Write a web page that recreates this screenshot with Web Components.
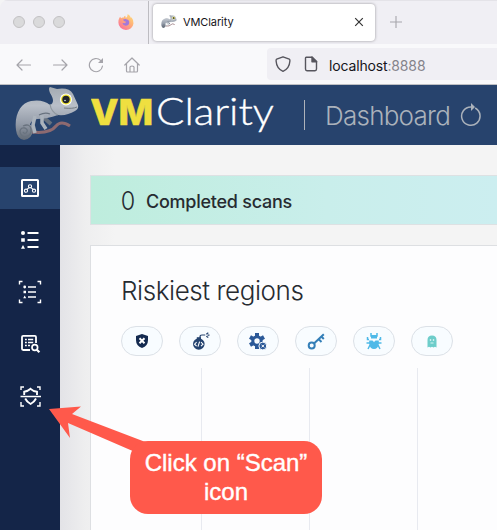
<!DOCTYPE html>
<html lang="en"><head><meta charset="utf-8"><title>VMClarity</title>
<style>html,body{margin:0;height:100%;overflow:hidden;font-family:Inter,"Liberation Sans",sans-serif}body{background:#f4f4f5}</style></head>
<body><vm-window></vm-window>
<script>
const define=(name,html)=>customElements.define(name,class extends HTMLElement{
  constructor(){super();const t=document.createElement('template');t.innerHTML=html;this.attachShadow({mode:'open'}).append(t.content.cloneNode(true));}
});
const icons={
 chart:'<rect x="4" y="4" width="16" height="16" rx=".6" stroke-width="2"/><g stroke-width="1.1"><circle cx="8" cy="14.7" r="1.6"/><circle cx="12" cy="10.3" r="1.6"/><circle cx="16" cy="14.7" r="1.6"/><path d="M9 13.4 11 11.6M13 11.6 15 13.4"/></g>',
 list:'<path d="M9.5 5H20.5M9.5 12H20.5M9.5 19H20.5" stroke-width="2"/><g fill="currentColor" stroke="none"><circle cx="5" cy="5" r="2"/><path d="M3.2 10.2h3.6v3.6H3.2zM5 17l2 3.7H3z"/></g>',
 scanlist:'<path d="M1.5 4.5V1.5H4.5M19.5 1.5H22.5V4.5M1.5 19.5V22.5H4.5M19.5 22.5H22.5V19.5" stroke-width="1.4"/><path d="M10 7H18M10 12H18M10 17H18" stroke-width="1.5"/><g fill="currentColor" stroke="none"><circle cx="6.7" cy="7" r="1.4"/><path d="M5.5 10.8h2.5v2.5H5.5zM6.7 15.6l1.5 2.6H5.2z"/></g>',
 search:'<path d="M12 18H5.2Q4 18 4 16.8V5Q4 3.8 5.2 3.8H16.8Q18 3.8 18 5V11" stroke-width="1.8"/><path d="M7 7.5h1.8M10 7.5h5.2M7 10.5h1.8M10 10.5h5.2M7 13.5h1.8M10 13.5h2" stroke-width="1.5"/><circle cx="16.8" cy="15.5" r="2.8" stroke-width="1.7"/><path d="m18.8 17.7 2.6 2.6" stroke-width="2.2"/>',
 shield:'<path d="M3 6V3H6M19 3H22V6M3 18V22H6M19 22H22V18" stroke-width="1.4"/><path d="M2.5 12.5H23" stroke-width="1.5"/><path d="M6.2 11V7.8Q10 7.2 12.6 4.8Q15 7.2 19 7.8V11M7.2 14.5Q9 18.2 12.6 20Q16.2 18.2 18 14.5" stroke-width="1.9"/>'
};
customElements.define('vm-nav-item',class extends HTMLElement{
 constructor(){super();this.attachShadow({mode:'open'});}
 connectedCallback(){this.shadowRoot.innerHTML=`<style>:host{display:flex;height:42px;align-items:center;justify-content:center;color:#fff}:host([active]){background:#27436d}svg{display:block;width:24px;height:24px;fill:none;stroke:currentColor}</style><svg viewBox="0 0 24 24">${icons[this.getAttribute('icon')]}</svg>`;}
});
define('vm-tabs',`<style>
:host{display:flex;height:44px;background:#f0eff4;box-sizing:border-box;border-top:1px solid #e4e3e8}
.left{display:flex;align-items:center;border-right:1px solid #bdbcc1;box-sizing:border-box;width:149px;padding-left:13px;padding-bottom:1px}
i{width:10px;height:10px;border:1px solid #c2c1c3;border-radius:50%;background:#dadadb;margin-right:8px}
.fox{margin-left:44px;width:18px;height:18px}
.tab{display:flex;align-items:center;box-sizing:border-box;width:222px;height:37px;margin:3px 0 0 4px;background:#fff;border-radius:4px;box-shadow:0 0 3px #6b6a70b0;padding:0 11px 2px 8px;font-size:11px;letter-spacing:-.1px;color:#15141a}
.tab span{flex:1;padding-left:6px;padding-top:1px}.x{width:10px;height:10px}.plus{width:12px;height:12px;margin:15px 0 0 15px}svg{display:block;flex:none}
</style><div class="left"><i></i><i></i><i></i><svg class="fox" viewBox="0 0 18 18"><defs><linearGradient id="f" x1="1" x2=".2" y2="1"><stop stop-color="#ffe676"/><stop offset=".5" stop-color="#ffad79"/><stop offset="1" stop-color="#fa6f9e"/></linearGradient></defs><path d="M9 17A7.4 7.4 0 0 1 1.4 9.5C1.3 6.5 2.3 5 3.1 3.7L4.1 5.2Q5.2 4.4 6.5 4.7Q6.8 3.2 8.3 2.7L8.7 4.7Q10.5 4.5 10.7 1Q13.3 2.3 14 5L14.5 4.3Q17 7.6 16.5 10.5A7.5 7.5 0 0 1 9 17Z" fill="url(#f)"/><path d="M5.8 6.7Q8 5.8 9.3 6.2Q12.7 7 12.2 10Q11.6 12.8 8.8 12.8Q6 12.7 5.4 10.1L8.2 10.2 9 8.7 7.3 8.2Z" fill="#a478d9"/></svg></div>
<div class="tab"><vm-lizard style="width:16px;height:13px"></vm-lizard><span>VMClarity</span><svg class="x" viewBox="0 0 10 10"><path d="m1.2 1.2 7.6 7.6M8.8 1.2 1.2 8.8" stroke="#333" stroke-width="1.2"/></svg></div>
<svg class="plus" viewBox="0 0 12 12"><path d="M6 0V12M0 6H12" stroke="#a6a5ab" stroke-width="1.1"/></svg>`);
define('vm-lizard',`<style>:host{display:block;flex:none;width:64px;height:53px}svg{display:block;width:100%;height:100%}</style><svg viewBox="0 0 64 53"><defs><linearGradient id="g" x2="0" y2="1"><stop stop-color="#a4abb2"/><stop offset=".35" stop-color="#b9bfc8"/><stop offset=".7" stop-color="#929aa7"/><stop offset="1" stop-color="#616a76"/></linearGradient></defs>
<path d="M17 45Q35 47 41 39Q46 33 55 39" fill="none" stroke="#8e6a70" stroke-width="3"/><path d="M28 30 36 37" stroke="#66717f" stroke-width="4"/>
<path d="M1 43C-1 27 6 16 16 14Q28 12 35 18Q41 15 35 6Q33 1 35 0L42 2Q54 0 58 7L63 18Q64 22 60 24Q52 29 43 28Q32 32 22 32Q15 34 15 38Q18 38 18 43Q17 52 9 53Q2 52 1 43Z" fill="url(#g)"/><path d="M35 17Q36 25 43 28" fill="none" stroke="#8e979e" stroke-width="1.2"/><path d="M24 28Q30 25 35 27M8 39Q15 36 16 42Q17 49 10 50Q5 49 5 44Q6 40 10 41Q14 43 11 46Q9 47 8 45" fill="none" stroke="#69737f" stroke-width="1.3"/><path d="M20 29 18 38 20 46 M27 28 27 36 31 42" fill="none" stroke="#abb3bc" stroke-width="3.5"/><path d="M49 21Q58 22 62 20" stroke="#747d83" fill="none"/><circle cx="51" cy="12.5" r="6" fill="#fff"/><circle cx="51" cy="12.5" r="5" fill="#eee231"/><circle cx="51" cy="12.5" r="3.7" fill="#21242a"/><circle cx="50" cy="13.5" r=".8" fill="#dceef8"/></svg>`);
define('vm-toolbar',`<style>:host{display:flex;align-items:center;box-sizing:border-box;height:41px;background:#f9f9fb;border-bottom:1px solid #bfc0c4;padding-left:16px}svg{display:block;flex:none;width:16px;height:16px;fill:none;stroke:#a5a4aa;stroke-width:1.2;margin-right:20px;stroke-linejoin:round;stroke-linecap:round}.url{flex:1;height:32px;margin-left:127px;background:#f0eff4;border-radius:4px 0 0 4px;display:flex;align-items:center;font-size:14px;letter-spacing:-.15px;padding-left:8px;color:#15141a}.url span{padding-top:2px}.url svg{stroke:#56555d;margin-right:12px;stroke-width:1.4}.url svg+svg{margin-right:10px}.url b{font-weight:400;color:#85848b}nav{display:flex}nav svg{margin-top:1px}</style>
<nav><svg viewBox="0 0 16 16"><path d="M14.5 8H1M6 3 1 8 6 13"/></svg><svg viewBox="0 0 16 16"><path d="M1.5 8H15M10 3 15 8 10 13"/></svg><svg viewBox="0 0 16 16"><path d="M14.5 9A6.6 6.6 0 1 1 12.6 3.4"/><path d="M15 1V6H10Z" fill="#a5a4aa" stroke="none"/></svg><svg viewBox="0 0 16 16" style="margin-right:0"><path d="m.8 8 7.2-7 7.2 7M2.5 6.5V14Q2.5 15 3.5 15H12.5Q13.5 15 13.5 14V6.5M6 15V10Q6 9 8 9T10 10V15"/></svg></nav>
<div class="url"><svg viewBox="0 0 16 16"><path d="M8 .8 14.3 3.2Q15 3.5 14.9 5Q14.4 12.7 8 15.3Q1.6 12.7 1.1 5Q1 3.5 1.7 3.2Z"/></svg><svg viewBox="0 0 16 16"><path d="M3.2 1.2H9L13.5 5.5V13Q13.5 14.7 12 14.7H4Q2.5 14.7 2.5 13V2Q2.5 1.2 3.2 1.2Z"/><path d="M9 1V5.8H13.7Z" fill="#56555d"/></svg><span>localhost<b>:8888</b></span></div>`);
define('vm-header',`<style>:host{display:flex;align-items:center;height:60px;background:#27436d;padding-left:15px;box-sizing:border-box}vm-lizard{margin-bottom:4px}.logo{width:190px;height:60px;margin-left:12px;flex:none}.page{border-left:1px solid #aeb3bb;height:30px;display:flex;align-items:center;margin-left:23px;padding-left:20px;color:#abb2bb;font-size:26px;font-weight:300;letter-spacing:-.75px}.page svg{width:22px;height:24px;margin-left:10px;flex:none}</style><vm-lizard></vm-lizard><svg class="logo" viewBox="0 0 190 60"><text x="-.7" y="40" textLength="63" lengthAdjust="spacingAndGlyphs" fill="#efdf40" font-family="Inter" font-size="36" font-weight="800" stroke="#efdf40" stroke-width=".5">VM</text><text x="65" y="40" textLength="118" lengthAdjust="spacingAndGlyphs" fill="#fff" stroke="#fff" stroke-width=".35" font-family="Lato" font-size="37" font-weight="300">Clarity</text></svg><div class="page"><span>Dashboard</span><svg viewBox="0 0 22 24" fill="none" stroke="#abb2bb" stroke-width="1.5"><path d="M15.2 5A9.2 9.2 0 1 1 11 3.9"/><path d="M11 0 15 4 11 8Z" fill="#abb2bb" stroke="none"/></svg></div>`);
const risk={
a:'<path d="M8 1 14 3V7Q14 13 8 15Q2 13 2 7V3Z" fill="#142a50"/><path d="m5.5 5.3 5 5M10.5 5.3l-5 5" stroke="#fff" stroke-width="2"/>',
b:'<circle cx="6.8" cy="11" r="5.8" fill="#25436f"/><path d="M4.8 7V4.2H9V7" fill="#25436f"/><path d="M8 5V4Q8 2 10 2H13.3M14.3 1.2l2-1.4M15.5 2.2h2M14.3 3.2l2 1.4" stroke="#25436f" stroke-width="1.2" fill="none"/><path d="m4.6 9.2-2 2 2 2M9 9.2l2 2-2 2M7.6 8.7 6 13.7" stroke="#fff" stroke-width="1.1" fill="none"/>',
c:'<circle cx="7" cy="8" r="4.2" fill="none" stroke="#2b5998" stroke-width="3"/><path d="M7 0V3M7 13V16M0 4l3 1.7M11 10.3l3 1.7M0 12l3-1.7M11 5.7l3-1.7" stroke="#2b5998" stroke-width="4"/><circle cx="12.8" cy="13" r="3.9" fill="#2b5998" stroke="#f8fcff"/><path d="m11.5 11.7 2.7 2.7m0-2.7-2.7 2.7" stroke="#fff"/>',
d:'<g fill="none" stroke="#347fb8" stroke-width="2"><circle cx="3.7" cy="12.5" r="3"/><path d="M6 10.5 15.8 1.2M10.5 6l3 3M13.3 3.5l2.5 2.5"/></g>',
e:'<path d="M5 0v3h6V0M3 6.5H1.5V4M13 6.5H14.5V4M4 10H.5M12 10H15.5M4 12 2 16M12 12l2 4" stroke="#4eb9e8" stroke-width="1.5" fill="none"/><path d="M5 2H11V5.5H5zM3.2 7.5H12.8V11Q12 16 8 16T3.2 11Z" fill="#4eb9e8"/><path d="m6.3 7 1.7 2.3L9.7 7Z" fill="#f8fcff"/>',
f:'<path d="M3.5 14.5V7Q3.5 2.5 8 2.5T12.5 7V14.5L11 13.7 9.5 14.5 8 13.7 6.5 14.5 5 13.7Z" fill="#6dcdca"/><circle cx="6.5" cy="7" r=".8" fill="#fff"/><circle cx="9.5" cy="7" r=".8" fill="#fff"/><path d="M6.5 10H9.5" stroke="#d9f5f2"/>'};
customElements.define('vm-risk',class extends HTMLElement{constructor(){super();this.attachShadow({mode:'open'})}connectedCallback(){this.shadowRoot.innerHTML=`<style>:host{display:flex;box-sizing:border-box;width:42px;height:30px;border:1px solid #dce1e7;border-radius:15px;background:#f8fcff;align-items:center;justify-content:center}svg{width:16px;height:16px;overflow:visible}</style><svg viewBox="0 0 16 16">${risk[this.getAttribute('kind')]}</svg>`;}});
define('vm-callout',`<style>:host{display:block;position:absolute;left:48px;top:405px;width:274px;height:110px}.arrow{display:block;width:110px;height:55px}.box{position:absolute;left:82px;top:36px;width:192px;height:73px;box-sizing:border-box;border-radius:18px;background:#ff594b;color:#fff;text-align:center;padding-top:7px;font:24px/29px "Liberation Sans",sans-serif;-webkit-text-stroke:.4px #fff}</style><svg class="arrow" viewBox="0 0 110 55"><path d="M1 4 33 1.5 24 9 100 38V51L87 47 20 18 22 33Z" fill="#ff594b"/></svg><div class="box"><span>Click on “Scan”<br>icon</span></div>`);
define('vm-main',`<style>:host{display:flex;flex-direction:column;box-sizing:border-box;flex:1;min-width:0;padding:30px 0 0 30px;background:linear-gradient(90deg,#e3e3e7 0,#eeeeef 25px,#f4f4f4 55px);gap:20px}.banner{box-sizing:border-box;height:50px;border:1px solid #dde1e3;border-right:0;background:linear-gradient(90deg,#beeddd,#c9eeeb 58%,#cceef0);padding-left:29px;display:flex;align-items:center;gap:11px;color:#272b31;flex:none}.n{font-size:26px;font-weight:300;width:16px;transform:scaleX(.9)}.l{font-size:18px;font-weight:500;letter-spacing:-.25px;padding-top:2px;margin-left:-1px}.card{flex:1;border:1px solid #dddfe2;border-right:0;border-bottom:0;background:#fdfdfe;padding:29px 0 0 30px;display:flex;flex-direction:column}h2{font-size:26px;line-height:31px;font-weight:300;margin:0;color:#272b31;letter-spacing:-.42px}.pills{display:flex;gap:16px;margin-top:20px}.grid{flex:1;display:grid;grid-template-columns:repeat(3,108px);margin:12px 0 0 -27px}.grid span{border-right:1px solid #e8eaf0}</style><div class="banner"><span class="n">0</span><span class="l">Completed scans</span></div><section class="card"><h2>Riskiest regions</h2><div class="pills">${[...'abcdef'].map(k=>`<vm-risk kind="${k}"></vm-risk>`).join('')}</div><div class="grid"><span></span><span></span><span></span></div></section>`);
define('vm-sidebar',`<style>:host{display:flex;flex-direction:column;gap:10px;width:60px;flex:none;box-sizing:border-box;padding-top:22px;background:#142548}</style>${Object.keys(icons).map((k,i)=>`<vm-nav-item icon="${k}"${i?'':' active'}></vm-nav-item>`).join('')}`);
define('vm-window',`<style>:host{display:flex;flex-direction:column;height:530px;width:497px;position:relative;overflow:hidden;border-top-left-radius:8px}.body{display:flex;flex:1;min-height:0}</style><vm-tabs></vm-tabs><vm-toolbar></vm-toolbar><vm-header></vm-header><div class="body"><vm-sidebar></vm-sidebar><vm-main></vm-main></div><vm-callout></vm-callout>`);
</script></body></html>
